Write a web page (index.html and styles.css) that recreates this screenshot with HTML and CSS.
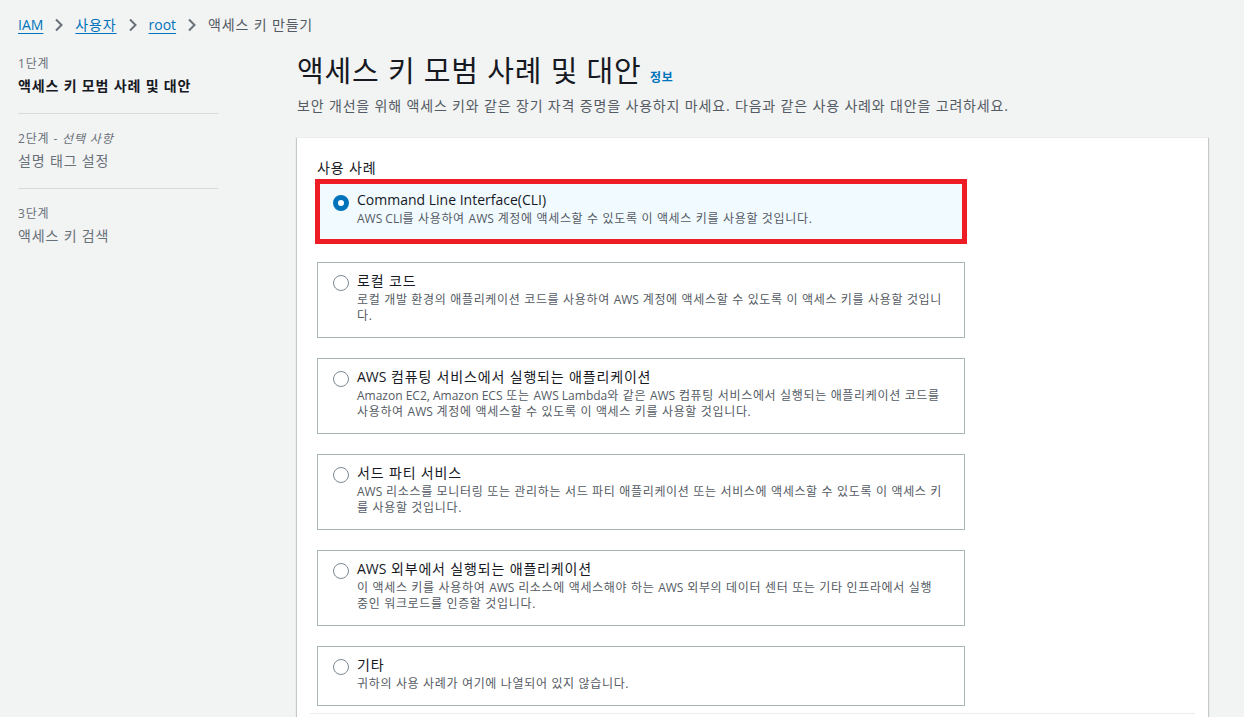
FILE: index.html
```html
<!DOCTYPE html>
<html lang="ko">
<head>
  <meta charset="UTF-8">
  <title>액세스 키 만들기</title>
  <link rel="stylesheet" href="styles.css">
</head>
<body>
  <nav class="breadcrumb">
    <a href="#" class="en">IAM</a>
    <svg class="chev" width="10" height="14" viewBox="0 0 10 14"><path d="M2 1.5l5.5 5.5-5.5 5.5" fill="none" stroke="#687078" stroke-width="2"/></svg>
    <a href="#">사용자</a>
    <svg class="chev" width="10" height="14" viewBox="0 0 10 14"><path d="M2 1.5l5.5 5.5-5.5 5.5" fill="none" stroke="#687078" stroke-width="2"/></svg>
    <a href="#" class="en">root</a>
    <svg class="chev" width="10" height="14" viewBox="0 0 10 14"><path d="M2 1.5l5.5 5.5-5.5 5.5" fill="none" stroke="#687078" stroke-width="2"/></svg>
    <span class="current">액세스 키 만들기</span>
  </nav>

  <div class="layout">
    <aside class="steps">
      <div class="step">
        <div class="step-num">1단계</div>
        <div class="step-title active">액세스 키 모범 사례 및 대안</div>
      </div>
      <div class="step">
        <div class="step-num">2단계 - <i>선택 사항</i></div>
        <div class="step-title">설명 태그 설정</div>
      </div>
      <div class="step last">
        <div class="step-num">3단계</div>
        <div class="step-title">액세스 키 검색</div>
      </div>
    </aside>

    <main class="content">
      <h1>액세스 키 모범 사례 및 대안 <a href="#" class="info">정보</a></h1>
      <p class="lead">보안 개선을 위해 액세스 키와 같은 장기 자격 증명을 사용하지 마세요. 다음과 같은 사용 사례와 대안을 고려하세요.</p>

      <section class="card">
        <div class="field-label">사용 사례</div>
        <div class="options">
          <label class="option selected">
            <span class="radio"></span>
            <span class="option-text">
              <span class="option-title en">Command Line Interface(CLI)</span>
              <span class="option-desc"><span class="en">AWS CLI</span>를 사용하여 <span class="en">AWS</span> 계정에 액세스할 수 있도록 이 액세스 키를 사용할 것입니다.</span>
            </span>
          </label>
          <label class="option">
            <span class="radio"></span>
            <span class="option-text">
              <span class="option-title">로컬 코드</span>
              <span class="option-desc">로컬 개발 환경의 애플리케이션 코드를 사용하여 <span class="en">AWS</span> 계정에 액세스할 수 있도록 이 액세스 키를 사용할 것입니다.</span>
            </span>
          </label>
          <label class="option">
            <span class="radio"></span>
            <span class="option-text">
              <span class="option-title"><span class="en">AWS</span> 컴퓨팅 서비스에서 실행되는 애플리케이션</span>
              <span class="option-desc"><span class="en">Amazon EC2, Amazon ECS</span> 또는 <span class="en">AWS Lambda</span>와 같은 <span class="en">AWS</span> 컴퓨팅 서비스에서 실행되는 애플리케이션 코드를 사용하여 <span class="en">AWS</span> 계정에 액세스할 수 있도록 이 액세스 키를 사용할 것입니다.</span>
            </span>
          </label>
          <label class="option">
            <span class="radio"></span>
            <span class="option-text">
              <span class="option-title">서드 파티 서비스</span>
              <span class="option-desc"><span class="en">AWS</span> 리소스를 모니터링 또는 관리하는 서드 파티 애플리케이션 또는 서비스에 액세스할 수 있도록 이 액세스 키를 사용할 것입니다.</span>
            </span>
          </label>
          <label class="option">
            <span class="radio"></span>
            <span class="option-text">
              <span class="option-title"><span class="en">AWS</span> 외부에서 실행되는 애플리케이션</span>
              <span class="option-desc">이 액세스 키를 사용하여 <span class="en">AWS</span> 리소스에 액세스해야 하는 <span class="en">AWS</span> 외부의 데이터 센터 또는 기타 인프라에서 실행 중인 워크로드를 인증할 것입니다.</span>
            </span>
          </label>
          <label class="option">
            <span class="radio"></span>
            <span class="option-text">
              <span class="option-title">기타</span>
              <span class="option-desc">귀하의 사용 사례가 여기에 나열되어 있지 않습니다.</span>
            </span>
          </label>
        </div>
        <div class="divider"></div>
      </section>
    </main>
  </div>
</body>
</html>
```

FILE: styles.css
```css
body {
  margin: 0;
  background: #f2f3f3;
  font-family: "Open Sans", "Noto Sans CJK KR", sans-serif;
  color: #16191f;
  font-size: 14px;
  line-height: 20px;
  letter-spacing: 0.06em;
  overflow: hidden;
}
a {
  color: #0073bb;
}
.en {
  letter-spacing: 0;
}
.breadcrumb {
  display: flex;
  align-items: center;
  gap: 11px;
  padding: 15px 18px 0;
  height: 20px;
}
.breadcrumb a {
  text-decoration: underline;
  text-underline-offset: 3px;
}
.breadcrumb .current {
  color: #545b64;
}
.chev {
  display: block;
}
.layout {
  display: flex;
  gap: 79px;
  padding: 21px 36px 0 18px;
}
.steps {
  width: 200px;
  flex: none;
}
.step {
  border-bottom: 1px solid #d5dbdb;
  padding-bottom: 17px;
  margin-bottom: 17px;
}
.step.last {
  border-bottom: none;
}
.step-num {
  font-size: 12px;
  line-height: 16px;
  color: #687078;
}
.step-title {
  margin-top: 4px;
  color: #687078;
}
.step-title.active {
  color: #16191f;
  font-weight: 700;
}
.content {
  flex: 1;
  min-width: 0;
}
h1 {
  margin: -3px 0 0;
  font-size: 29px;
  line-height: 36px;
  font-weight: 400;
}
.info {
  font-size: 12px;
  font-weight: 700;
  text-decoration: none;
  margin-left: 0;
}
.lead {
  margin: 0 0 21px;
  color: #545b64;
}
.card {
  background: #fff;
  padding: 19px 20px 0;
  height: 600px;
  box-shadow: 0 1px 1px 0 rgba(0,28,36,0.3), 1px 1px 1px 0 rgba(0,28,36,0.15), -1px 1px 1px 0 rgba(0,28,36,0.15);
  border-top: 1px solid #eaeded;
}
.field-label {
  line-height: 22px;
  margin-bottom: 2px;
}
.options {
  display: flex;
  flex-direction: column;
  gap: 20px;
  max-width: 648px;
}
.option {
  display: flex;
  align-items: flex-start;
  gap: 8px;
  border: 1px solid #aab7b8;
  padding: 7px 18px 13px 15px;
  cursor: pointer;
}
.option.selected {
  background: #f1faff;
  border-color: #0073bb;
  outline: 5px solid #ee1c25;
  outline-offset: -3px;
  padding-bottom: 14px;
}
.radio {
  flex: none;
  width: 16px;
  height: 16px;
  border: 1.5px solid #7d8998;
  border-radius: 50%;
  background: #fff;
  margin-top: 5px;
  box-sizing: border-box;
}
.option.selected .radio {
  border: 5px solid #0073bb;
  margin-top: 6px;
}
.option-text {
  display: flex;
  flex-direction: column;
}
.option-title {
  line-height: 22px;
}
.option-desc {
  font-size: 12px;
  line-height: 16px;
  letter-spacing: 0.055em;
  color: #545b64;
}
.option-desc .en {
  letter-spacing: 0;
}
.divider {
  border-top: 1px solid #eaeded;
  margin: 7px -7px 0;
}
```
